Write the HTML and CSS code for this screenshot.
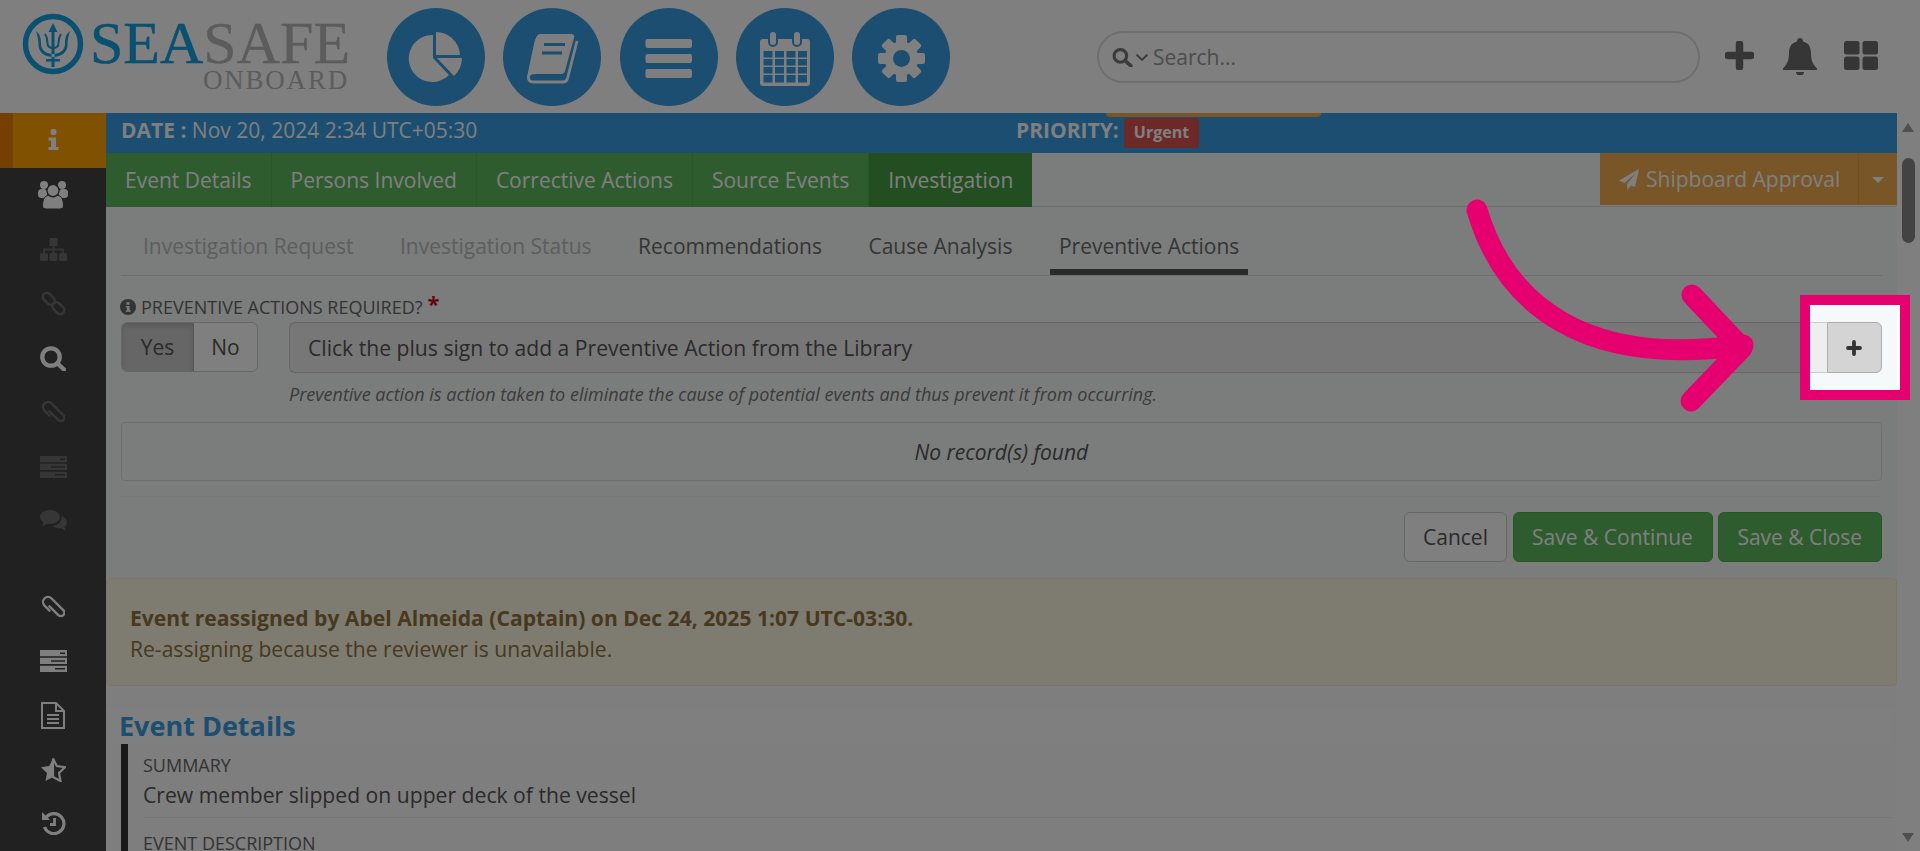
FILE: index.html
```html
<!DOCTYPE html>
<html lang="en">
<head>
<meta charset="utf-8">
<title>SeaSafe Onboard - Preventive Actions</title>
<link rel="stylesheet" href="styles.css">
</head>
<body>
<div class="app">
  <header class="header">
    <div class="logo">
      <svg class="trident" width="62" height="62" viewBox="0 0 62 62">
        <circle cx="31" cy="31" r="27.5" fill="none" stroke="currentColor" stroke-width="5.5"/>
        <path d="M31 10l-4.500 9h3V54h3V19h3zM14 18c4 3 5 7 5 13 0 6 5 10 12 10s12-4 12-10c0-6 1-10 5-13-1.500 5-2.500 9-2.500 14 0 7-6 12-14.500 12S16.500 39 16.500 32c0-5-1-9-2.500-14z" fill="currentColor"/>
        <path d="M23 21c2 3 2.500 6 2.500 9 0 3 2 5 5.500 5s5.500-2 5.500-5c0-3 .5-6 2.500-9" fill="none" stroke="currentColor" stroke-width="2"/>
        <rect x="24" y="46" width="14" height="2.500" fill="currentColor"/>
      </svg>
      <div class="wordmark">
        <div class="wm-top"><span class="wm-sea">SEA</span><span class="wm-safe">SAFE</span></div>
        <div class="wm-sub">ONBOARD</div>
      </div>
    </div>
    <nav class="circles">
      <a class="circle"><svg width="98" height="98" viewBox="0 0 98 98"><path d="M46 27A23.500 23.500 0 1 0 62 67L46 50ZM49 24A24 24 0 0 1 73 47H49ZM50 50H75A25 25 0 0 1 67 68Z" fill="#fff"/></svg></a>
      <a class="circle"><svg width="98" height="98" viewBox="0 0 98 98"><path d="M37 26H68q4 0 3 4l-9 33q-1 3-4 3H32q-4 0-5 2l-3 1 7-33q2-10 6-10z" fill="#fff"/><path d="M25.500 68q-1 6 5 6H60q3.500 0 4.500-3.500L74 33" fill="none" stroke="#fff" stroke-width="2.800"/><path d="M41 36.500H62M39 45H59" stroke="#369ce0" stroke-width="3"/></svg></a>
      <a class="circle"><svg width="98" height="98" viewBox="0 0 98 98"><g fill="#fff"><rect x="25.500" y="31" width="46.500" height="9" rx="2"/><rect x="25.500" y="46" width="46.500" height="9" rx="2"/><rect x="25.500" y="61" width="46.500" height="9" rx="2"/></g></svg></a>
      <a class="circle"><svg width="98" height="98" viewBox="0 0 98 98"><rect x="24" y="31" width="50" height="47" rx="3" fill="#fff"/><path fill="#369ce0" d="M27.500 43h9v6.500h-9zM39 43h9v6.500h-9zM50.500 43h9v6.500h-9zM62 43h9v6.500h-9zM27.500 51h9v6.500h-9zM39 51h9v6.500h-9zM50.500 51h9v6.500h-9zM62 51h9v6.500h-9zM27.500 59h9v6.500h-9zM39 59h9v6.500h-9zM50.500 59h9v6.500h-9zM62 59h9v6.500h-9zM27.500 67h9v7.500h-9zM39 67h9v7.500h-9zM50.500 67h9v7.500h-9zM62 67h9v7.500h-9z"/><g fill="#fff" stroke="#369ce0" stroke-width="2"><rect x="33" y="23" width="8" height="15" rx="4"/><rect x="57" y="23" width="8" height="15" rx="4"/></g></svg></a>
      <a class="circle"><svg width="98" height="98" viewBox="0 0 98 98"><g transform="translate(49.500 50.500)" fill="#fff"><circle r="17"/><rect x="-5.500" y="-23.500" width="11" height="47" rx="2"/><rect x="-5.500" y="-23.500" width="11" height="47" rx="2" transform="rotate(45)"/><rect x="-5.500" y="-23.500" width="11" height="47" rx="2" transform="rotate(90)"/><rect x="-5.500" y="-23.500" width="11" height="47" rx="2" transform="rotate(135)"/><circle r="8.500" fill="#369ce0"/></g></svg></a>
    </nav>
    <div class="search">
      <svg width="22" height="19" viewBox="0 0 21 18"><circle cx="8" cy="7.500" r="6" fill="none" stroke="currentColor" stroke-width="3"/><path d="M12.500 12L18 17" stroke="currentColor" stroke-width="3.500" stroke-linecap="round"/></svg>
      <svg class="chev" width="14" height="9" viewBox="0 0 14 9"><path d="M1.500 1.500L7 7l5.500-5.500" fill="none" stroke="currentColor" stroke-width="1.800"/></svg>
      <span class="search-text">Search...</span>
    </div>
    <div class="actions">
      <svg width="29" height="29" viewBox="0 0 29 29"><path d="M14.500 3v23M3 14.500h23" stroke="currentColor" stroke-width="7.500" stroke-linecap="round"/></svg>
      <svg width="34" height="37" viewBox="0 0 34 37"><path d="M17 0c2 0 3 1.500 3 3.500 6 1.500 8 6 8 12 0 8 3 12 6 15v1.500H0V30.500c3-3 6-7 6-15 0-6 2-10.500 8-12C14 1.500 15 0 17 0z" fill="currentColor"/><path d="M13 34a4 3.500 0 0 0 8 0z" fill="currentColor"/></svg>
      <svg class="grid-icon" width="34" height="29" viewBox="0 0 34 29"><g fill="currentColor"><rect width="15.500" height="13.500" rx="2.500"/><rect x="18.500" width="15.500" height="13.500" rx="2.500"/><rect y="15.500" width="15.500" height="13.500" rx="2.500"/><rect x="18.500" y="15.500" width="15.500" height="13.500" rx="2.500"/></g></svg>
    </div>
  </header>

  <div class="body">
    <aside class="sidebar">
      <a class="side-item active"><svg width="11" height="21" viewBox="0 0 11 21"><rect x="2.500" width="6" height="6" rx="2" fill="currentColor"/><path d="M.5 8.500h7.500V18H10.500v3H.5v-3H3v-6.500H.5z" fill="currentColor"/></svg></a>
      <a class="side-item lit"><svg width="30" height="28" viewBox="0 0 30 28"><g fill="currentColor"><circle cx="6" cy="4" r="4"/><circle cx="24" cy="4" r="4"/><rect y="8" width="9" height="9" rx="3.500"/><rect x="21" y="8" width="9" height="9" rx="3.500"/></g><circle cx="15" cy="9.500" r="6" fill="currentColor" stroke="#424242" stroke-width="1.200"/><path d="M4.500 25c0-8 3-10.500 6-10.500 2 1 3 1.500 4.500 1.500s2.500-.5 4.500-1.500c3 0 6 2.500 6 10.500 0 2-2 3-4 3H8.500c-2 0-4-1-4-3z" fill="currentColor" stroke="#424242" stroke-width="1"/></svg></a>
      <a class="side-item dim"><svg width="27" height="23" viewBox="0 0 27 23"><g fill="currentColor"><rect x="9.500" width="8" height="8" rx="1"/><rect y="15" width="8" height="8" rx="1.500"/><rect x="9.500" y="15" width="8" height="8" rx="1.500"/><rect x="19" y="15" width="8" height="8" rx="1.500"/></g><path d="M13.500 8v7M4 15v-3.500h19V15" fill="none" stroke="currentColor" stroke-width="1.800"/></svg></a>
      <a class="side-item dim"><svg width="25" height="25" viewBox="0 0 25 25"><g transform="rotate(45 12.500 12.500)" fill="none" stroke="currentColor" stroke-width="2.600"><rect x="-1" y="8.500" width="13.500" height="8" rx="4"/><rect x="12.500" y="8.500" width="13.500" height="8" rx="4"/></g></svg></a>
      <a class="side-item lit"><svg width="26" height="25" viewBox="0 0 26 25"><circle cx="11" cy="11" r="8.700" fill="none" stroke="currentColor" stroke-width="4.300"/><path d="M17.500 17.500L24 23.500" stroke="currentColor" stroke-width="4.300" stroke-linecap="round"/></svg></a>
      <a class="side-item dim"><svg width="24" height="24" viewBox="0 0 24 24"><g transform="rotate(-45 12 12)"><path d="M7 12V5a5 5 0 0 1 10 0V21.500a3.500 3.500 0 0 1-7 0V9" fill="none" stroke="currentColor" stroke-width="2.400" stroke-linecap="round"/></g></svg></a>
      <a class="side-item dim"><svg width="27" height="22" viewBox="0 0 27 22"><path fill-rule="evenodd" fill="currentColor" d="M0 0h27v6.300H0zM20 2.400v1.500h5V2.400zM0 7.800h27v6.300H0zM11 10.200v1.500h14v-1.500zM0 15.700h27V22H0zM15 18.100v1.500h10v-1.500z"/></svg></a>
      <a class="side-item dim"><svg width="27" height="22" viewBox="0 0 27 22"><path d="M10 0c5.500 0 10 3 10 7s-4.500 7-10 7c-1 0-2 0-3-.3L2 16.500l1.500-4C1.500 11 0 9 0 7c0-4 4.500-7 10-7z" fill="currentColor"/><path d="M21.500 6c3 1 5.500 3.500 5.500 6 0 2-1 3.500-2.500 4.500l1 4-4.500-2.500c-3 .5-6.500 0-8.500-2 6-.5 9.500-5 9-10z" fill="currentColor"/></svg></a>
      <div class="side-gap"></div>
      <a class="side-item mid"><svg width="24" height="24" viewBox="0 0 24 24"><g transform="rotate(-45 12 12)"><path d="M7 12V5a5 5 0 0 1 10 0V21.500a3.500 3.500 0 0 1-7 0V9" fill="none" stroke="currentColor" stroke-width="2.400" stroke-linecap="round"/></g></svg></a>
      <a class="side-item mid"><svg width="27" height="22" viewBox="0 0 27 22"><path fill-rule="evenodd" fill="currentColor" d="M0 0h27v6.300H0zM20 2.400v1.500h5V2.400zM0 7.800h27v6.300H0zM11 10.200v1.500h14v-1.500zM0 15.700h27V22H0zM15 18.100v1.500h10v-1.500z"/></svg></a>
      <a class="side-item mid"><svg width="24" height="27" viewBox="0 0 24 27"><path d="M1 1H15L23 9V26H1zM15 1V9H23M6 13H18M6 17H18M6 21H18" fill="none" stroke="currentColor" stroke-width="2"/></svg></a>
      <a class="side-item mid"><svg width="26" height="25" viewBox="0 0 26 25"><path d="M13 1.500L9.200 9 1 10.200l6 5.800L5.500 24 13 20z" fill="currentColor"/><path d="M13 1.500l3.800 7.500 8.200 1.200-6 5.800L20.500 24 13 20z" fill="none" stroke="currentColor" stroke-width="2.200"/></svg></a>
      <a class="side-item mid"><svg width="25" height="24" viewBox="0 0 25 24"><path d="M5 6.500A10 10 0 1 1 3.500 16" fill="none" stroke="currentColor" stroke-width="3.200"/><path d="M1 1l8 8H1z" fill="currentColor"/><path d="M13.500 7v6.500H9" fill="none" stroke="currentColor" stroke-width="2.800"/></svg></a>
    </aside>

    <main class="main">
      <div class="meta-bar">
        <span class="meta-tab"></span>
        <div class="meta-date"><b>DATE :</b> Nov 20, 2024 2:34 UTC+05:30</div>
        <div class="meta-priority"><b>PRIORITY:</b> <span class="badge">Urgent</span></div>
      </div>

      <div class="tabs">
        <a class="tab">Event Details</a>
        <a class="tab">Persons Involved</a>
        <a class="tab">Corrective Actions</a>
        <a class="tab">Source Events</a>
        <a class="tab current">Investigation</a>
        <div class="approval">
          <a class="approval-main"><svg width="20" height="21" viewBox="0 0 20 21"><path d="M20 0L0 11.500l5.500 2.500L17 4 8 15l.5 6 3.500-4.500 4 1.500z" fill="currentColor"/></svg>Shipboard Approval</a>
          <a class="approval-caret"></a>
        </div>
      </div>

      <section class="form">
        <ul class="subtabs">
          <li class="off">Investigation Request</li>
          <li class="off">Investigation Status</li>
          <li>Recommendations</li>
          <li>Cause Analysis</li>
          <li class="selected">Preventive Actions</li>
        </ul>

        <div class="field-label">
          <svg width="16" height="16" viewBox="0 0 15 15"><circle cx="7.500" cy="7.500" r="7.500" fill="currentColor"/><path d="M6 3h3v2.400H6zM5.500 6.500h3.500v4H10v1.500H5.500v-1.500h1V8H5.500z" fill="#f6f9f9"/></svg>
          <span>PREVENTIVE ACTIONS REQUIRED?</span><span class="req">*</span>
        </div>
        <div class="field-row">
          <div class="toggle"><span class="toggle-on">Yes</span><span class="toggle-off">No</span></div>
          <div class="input-wrap">
            <div class="input-group">
              <div class="input-fake">Click the plus sign to add a Preventive Action from the Library</div>
              <button class="add-btn"><svg width="18" height="16" viewBox="0 0 18 16"><path d="M9 2v12M3 8h12" stroke="currentColor" stroke-width="3.800" stroke-linecap="round"/></svg></button>
            </div>
            <p class="help">Preventive action is action taken to eliminate the cause of potential events and thus prevent it from occurring.</p>
          </div>
        </div>

        <div class="empty">No record(s) found</div>
        <div class="buttons">
          <button class="btn btn-default btn-cancel">Cancel</button>
          <button class="btn btn-green btn-continue">Save &amp; Continue</button>
          <button class="btn btn-green btn-close">Save &amp; Close</button>
        </div>
      </section>

      <div class="alert">
        <strong>Event reassigned by Abel Almeida (Captain) on Dec 24, 2025 1:07 UTC-03:30.</strong>
        <span>Re-assigning because the reviewer is unavailable.</span>
      </div>

      <section class="details">
        <h2 class="details-title">Event Details</h2>
        <div class="panel">
          <div class="kv">
            <div class="kv-key">SUMMARY</div>
            <div class="kv-val">Crew member slipped on upper deck of the vessel</div>
          </div>
          <div class="kv">
            <div class="kv-key">EVENT DESCRIPTION</div>
          </div>
        </div>
      </section>
    </main>

    <div class="scrollbar">
      <span class="sb-up"></span>
      <span class="sb-thumb"></span>
      <span class="sb-down"></span>
    </div>
  </div>
</div>

<div class="spotlight"></div>
<svg class="arrow" width="1920" height="851" viewBox="0 0 1920 851">
  <path d="M1477 210C1505 305 1585 368 1743 345" fill="none" stroke="#e6006f" stroke-width="21" stroke-linecap="round"/>
  <path d="M1692 295L1742 348 1691 401" fill="none" stroke="#e6006f" stroke-width="21" stroke-linecap="round" stroke-linejoin="round"/>
</svg>
</body>
</html>
```
FILE: styles.css
```css
* { box-sizing: border-box; }
html, body { margin: 0; height: 100%; overflow: hidden; }
body { font-family: "Open Sans", "Liberation Sans", sans-serif; font-size: 21px; color: #555; background: #fff; }
a { display: block; }
.app { display: flex; flex-direction: column; height: 851px; }

/* Header */
.header { height: 113px; flex: none; display: flex; background: #fff; }
.logo { display: flex; width: 387px; padding: 13px 0 0 22px; color: #14a0e0; }
.trident { flex: none; color: #14a0e0; }
.wordmark { margin-left: 6px; font-family: "Liberation Serif", serif; width: 257px; }
.wm-top { font-size: 60px; line-height: 50px; margin-top: 5px; white-space: nowrap; }
.wm-sea { color: #14a0e0; -webkit-text-stroke: .5px #14a0e0; }
.wm-safe { color: #b8b8b8; -webkit-text-stroke: .3px #b8b8b8; }
.wm-sub { font-size: 27px; line-height: 24px; letter-spacing: 1.800px; margin-right: -2px; color: #b8b8b8; text-align: right; }
.circles { display: flex; gap: 18.250px; padding-top: 8px; width: 710px; }
.circle { width: 98px; height: 98px; border-radius: 50%; background: #369ce0; flex: none; }
.circle svg { display: block; }
.search { width: 603px; height: 52px; margin-top: 31px; border: 2px solid #dedede; border-radius: 26px; display: flex; align-items: center; padding-left: 13px; color: #777; background: #fff; }
.chev { margin-left: 1px; }
.search-text { margin-left: 4px; color: #999; }
.actions { display: flex; gap: 29px; margin-left: 25px; padding-top: 38px; align-items: flex-start; color: #6c6c6c; }
.actions svg:first-child { margin-top: 3px; }
.actions .grid-icon { margin: 3px 0 0 -2px; }

/* Body */
.body { flex: 1; min-height: 0; display: flex; }
.sidebar { width: 106px; flex: none; background: #424242; display: flex; flex-direction: column; overflow: hidden; }
.side-item { height: 54.300px; flex: none; display: flex; align-items: center; justify-content: center; }
.side-item.active { height: 55px; background: #ffa200; border-left: 13px solid #e87e00; padding: 0 13px 2px 0; color: #fff; }
.side-item.lit { color: #fff; }
.side-item.dim { color: #6c6c6c; }
.side-item.mid { height: 54px; color: #fff; }
.side-gap { height: 32px; flex: none; }

.main { flex: 1; min-width: 0; overflow: hidden; background: #fff; }
.meta-bar { position: relative; height: 40px; background: #369ce0; display: flex; align-items: center; padding: 0 0 6px 15px; color: #fff; }
.meta-tab { position: absolute; left: 1000px; top: 0; width: 215px; height: 4px; background: #f0ad4e; border-radius: 0 0 4px 4px; }
.meta-date { width: 895px; flex: none; white-space: nowrap; }
.meta-priority { display: flex; align-items: center; gap: 5px; white-space: nowrap; }
.badge { height: 30px; margin-top: 5px; background: #d9534f; border-radius: 3px; padding: 0 10px; font-size: 16px; font-weight: 700; line-height: 29px; color: #fff; }

.tabs { height: 54px; display: flex; border-bottom: 1px solid #ddd; background: #f6f9f9; }
.tab { height: 54px; padding: 0 19px; line-height: 54px; background: #5cb85c; color: #fff; border-right: 1px solid #55ae55; white-space: nowrap; }
.tab.current { background: #449d44; border-right: 0; }
.approval { margin-left: auto; display: flex; height: 52px; background: #f0ad4e; color: #fff; }
.approval-main { width: 259px; display: flex; align-items: center; gap: 7px; padding-left: 19px; border-right: 1px solid #e69f3c; white-space: nowrap; }
.approval-caret { position: relative; width: 38px; }
.approval-caret::after { content: ""; position: absolute; left: 13px; top: 24px; border: 6px solid transparent; border-top-color: #fff; border-bottom: 0; }

/* Form */
.form { background: #f6f9f9; padding: 0 15.500px 16px 15px; }
.subtabs { list-style: none; margin: 0; padding: 0 0 0 13px; height: 69px; display: flex; gap: 28.500px; border-bottom: 1px solid #ddd; }
.subtabs li { padding: 0 9px; height: 68px; line-height: 78px; color: #6b6b6b; white-space: nowrap; }
.subtabs li.off { color: #bbb; }
.subtabs li.selected { border-bottom: 6px solid #555; }
.field-label { display: flex; align-items: center; height: 22px; margin-top: 20px; font-size: 18px; color: #666; white-space: nowrap; }
.field-label svg { margin: 0 5px 0 -1px; }
.req { color: #c11; font-size: 22px; font-weight: 700; margin: -8px 0 0 5px; line-height: 14px; }
.field-row { display: flex; gap: 31px; margin-top: 4px; }
.toggle { display: flex; width: 137px; height: 50px; flex: none; border: 1px solid #ccc; border-radius: 6px; overflow: hidden; background: #fff; line-height: 48px; color: #555; }
.toggle-on { width: 72px; text-align: center; background: #ccc; box-shadow: inset 0 3px 5px rgba(0,0,0,.125); border-right: 1px solid #adadad; }
.toggle-off { flex: 1; text-align: center; }
.input-wrap { flex: 1; min-width: 0; }
.input-group { display: flex; height: 51px; }
.input-fake { flex: 1; border: 1px solid #ccc; border-right: 0; border-radius: 6px 0 0 6px; background: #eee; padding-left: 18px; font-size: 21.150px; line-height: 50px; color: #555; white-space: nowrap; }
.add-btn { width: 54.500px; height: 51px; padding: 0; border: 1px solid #adadad; border-radius: 0 6px 6px 0; background: #d4d4d4; color: #333; display: flex; align-items: center; justify-content: center; }
.help { margin: 10px 0 0; font-size: 18px; line-height: 22px; font-style: italic; color: #777; white-space: nowrap; }
.empty { margin-top: 17px; height: 59px; border: 1px solid #ddd; border-radius: 4px; background: #f6f9f9; text-align: center; line-height: 58px; font-style: italic; color: #555; }
.buttons { display: flex; justify-content: flex-end; gap: 5.500px; margin-top: 15px; padding-top: 15px; border-top: 1px solid #eef0f0; }
.btn { height: 50px; padding: 0; border-radius: 6px; font: 21px "Open Sans", sans-serif; white-space: nowrap; }
.btn-cancel { width: 103px; }
.btn-continue { width: 200px; }
.btn-close { width: 163.500px; }
.btn-default { background: #fff; border: 1px solid #ccc; color: #555; }
.btn-green { background: #5cb85c; border: 1px solid #4cae4c; color: #fff; }

/* Alert */
.alert { height: 108px; display: flex; flex-direction: column; justify-content: center; padding: 2px 23px 0; background: #fcf8e3; border: 1px solid #faebcc; border-radius: 4px; color: #8f7240; font-size: 21.100px; line-height: 31px; }

/* Details */
.details { background: #fcfcfc; height: 200px; padding-top: 23px; }
.details-title { margin: 0 4px 0 0; padding-left: 13px; height: 35px; line-height: 34px; font-size: 27px; font-weight: 700; color: #369ce0; background: #fff; }
.panel { margin: 0 4px 0 15px; border-left: 7px solid #333; padding-left: 15px; }
.kv { padding-top: 10px; border-bottom: 1px solid #eee; height: 74px; }
.kv + .kv { padding-top: 14px; }
.kv-key { font-size: 18px; line-height: 22px; color: #666; }
.kv-val { margin-top: 5px; font-size: 21.150px; line-height: 28px; color: #555; }

/* Scrollbar */
.scrollbar { width: 23px; flex: none; position: relative; background: #fff; }
.sb-up, .sb-down { position: absolute; left: 5px; width: 0; height: 0; border: 6px solid transparent; }
.sb-up { top: 10px; border-bottom: 9px solid #a0a0a0; border-top: 0; }
.sb-down { bottom: 9px; border-top: 9px solid #a0a0a0; border-bottom: 0; }
.sb-thumb { position: absolute; left: 5px; top: 45px; width: 13px; height: 85px; border-radius: 7px; background: #868686; }

/* Tutorial overlay */
.spotlight { position: fixed; left: 1800px; top: 295px; width: 110px; height: 105px; border: 10px solid #e6006f; box-shadow: 0 0 0 3000px rgba(0,0,0,.5); }
.arrow { position: fixed; left: 0; top: 0; pointer-events: none; }
```
